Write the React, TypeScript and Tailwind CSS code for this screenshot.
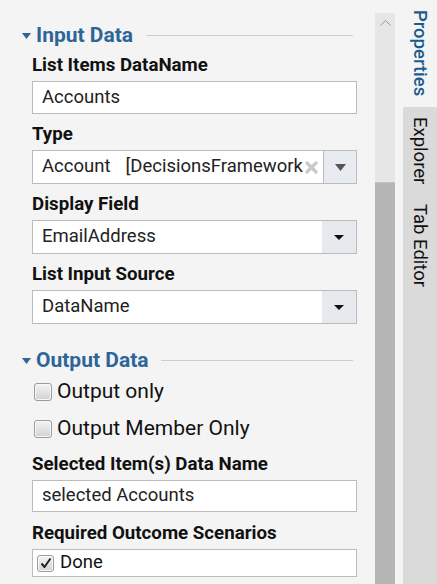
import React from "react";

const F = { fontFamily: "Roboto, 'Liberation Sans', sans-serif" };

function Header({ title }: { title: string }) {
  return (
    <div className="flex items-center h-[26px] -ml-[10px] mr-[4px]">
      <svg width="9" height="6" viewBox="0 0 9 6" className="shrink-0 mt-[2px]">
        <polygon points="0,0 9,0 4.5,6" fill="#2e6599" />
      </svg>
      <span className="ml-[5px] text-[21px] leading-[26px] font-bold text-[#2e6599] whitespace-nowrap">
        {title}
      </span>
      <div className="flex-1 ml-[13px] h-px bg-[#c9cdd4]" />
    </div>
  );
}

function Label({ text, mt }: { text: string; mt: string }) {
  return (
    <div className={`${mt} mb-[5px] h-[22px] text-[18.7px] leading-[22px] font-bold text-[#111] whitespace-nowrap`}>
      {text}
    </div>
  );
}

function TextInput({ value, h }: { value: string; h: string }) {
  return (
    <div className={`${h} bg-white border border-[#bcbcbc] flex items-center pl-[9px] text-[18.5px] text-[#222]`}>
      {value}
    </div>
  );
}

function Select({ value }: { value: string }) {
  return (
    <div className="h-[34px] bg-white border border-[#bcbcbc] flex items-stretch text-[18.5px] text-[#222]">
      <div className="flex-1 flex items-center pl-[9px]">{value}</div>
      <div className="w-[34px] bg-[#e6eaef] flex items-center justify-center">
        <svg width="10" height="5" viewBox="0 0 10 5">
          <polygon points="0,0 10,0 5,5" fill="#111" />
        </svg>
      </div>
    </div>
  );
}

function CheckBox({ checked, size }: { checked?: boolean; size: string }) {
  return (
    <div
      className={`${size} shrink-0 rounded-[3px] border border-[#9c9c9c] bg-gradient-to-b from-[#f4f4f4] to-[#d2d2d2] flex items-center justify-center shadow-[inset_0_0_0_1px_#f8f8f8]`}
    >
      {checked && (
        <svg width="12" height="12" viewBox="0 0 12 12">
          <path d="M1.5 6.5 L4.5 10 L10.5 1.5" stroke="#222" strokeWidth="2" fill="none" strokeLinejoin="round" />
        </svg>
      )}
    </div>
  );
}

function CheckRow({ text }: { text: string }) {
  return (
    <div className="h-[37px] flex items-center ml-[2px]">
      <CheckBox size="w-[18px] h-[18px]" />
      <span className="ml-[5px] text-[21px] text-[#111] whitespace-nowrap">{text}</span>
    </div>
  );
}

function VTab({ text, active, cls }: { text: string; active?: boolean; cls?: string }) {
  return (
    <div className={`flex justify-center py-[10px] ${cls ?? ""}`}>
      <span
        className={`text-[18.5px] leading-[22px] whitespace-nowrap ${active ? "text-[#1b5c8f] font-medium" : "text-[#111]"}`}
        style={{ writingMode: "vertical-rl" }}
      >
        {text}
      </span>
    </div>
  );
}

export default function App() {
  return (
    <div className="w-[437px] h-[584px] bg-[#f4f4f4] flex overflow-hidden" style={F}>
      <div className="w-[375px] pl-[32px] pr-[18px] pt-[22px] flex flex-col">
        <Header title="Input Data" />
        <Label text="List Items DataName" mt="mt-[6px]" />
        <TextInput value="Accounts" h="h-[33px]" />
        <Label text="Type" mt="mt-[9px]" />
        <div className="h-[34px] bg-white border border-[#bcbcbc] flex items-stretch text-[18.5px] text-[#222]">
          <div className="w-[270px] overflow-hidden flex items-center pl-[9px] whitespace-nowrap">
            <span>Account</span>
            <span className="ml-[15px]">[DecisionsFramework.Design]</span>
          </div>
          <div className="w-[20px] flex items-center justify-start">
            <svg width="13" height="13" viewBox="0 0 13 13" className="ml-[2px]">
              <path d="M2 2 L11 11 M11 2 L2 11" stroke="#c9c9c9" strokeWidth="3.2" strokeLinecap="round" />
            </svg>
          </div>
          <div className="flex-1 border-l border-[#bcbcbc] bg-[#e8ecf0] flex items-center justify-center">
            <svg width="11" height="7" viewBox="0 0 11 7">
              <polygon points="0,0 11,0 5.5,7" fill="#555" />
            </svg>
          </div>
        </div>
        <Label text="Display Field" mt="mt-[9px]" />
        <Select value="EmailAddress" />
        <Label text="List Input Source" mt="mt-[9px]" />
        <Select value="DataName" />
        <div className="mt-[23px]">
          <Header title="Output Data" />
        </div>
        <CheckRow text="Output only" />
        <CheckRow text="Output Member Only" />
        <Label text="Selected Item(s) Data Name" mt="mt-[6px]" />
        <TextInput value="selected Accounts" h="h-[32px]" />
        <Label text="Required Outcome Scenarios" mt="mt-[10px]" />
        <div className="h-[28px] bg-white border border-[#bcbcbc] flex items-center pl-[4px]">
          <CheckBox checked size="w-[17px] h-[17px]" />
          <span className="ml-[6px] text-[18.5px] text-[#111]">Done</span>
        </div>
      </div>

      <div className="w-[20px] mt-[13px] flex flex-col">
        <div className="h-[169px] bg-[#e6e6e6] flex justify-center pt-[7px]">
          <svg width="11" height="6" viewBox="0 0 11 6">
            <polyline points="0.5,5.5 5.5,0.5 10.5,5.5" stroke="#9a9a9a" strokeWidth="1" fill="none" />
          </svg>
        </div>
        <div className="flex-1 bg-[#b5b5b5] border-t border-[#c4c4c4]" />
      </div>

      <div className="w-[8px]" />

      <div className="w-[34px] flex flex-col">
        <VTab text="Properties" active cls="h-[107px] bg-[#f4f4f4]" />
        <div className="flex-1 bg-[#dadada] flex flex-col">
          <VTab text="Explorer" />
          <VTab text="Tab Editor" />
        </div>
      </div>
    </div>
  );
}
